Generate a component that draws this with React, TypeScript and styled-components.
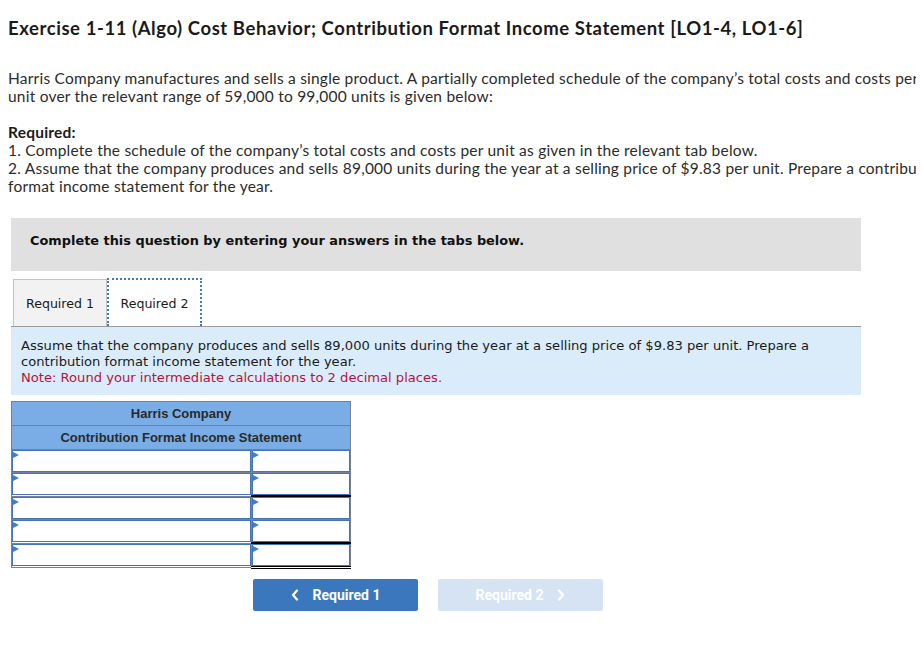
import React from "react";
import styled, { createGlobalStyle } from "styled-components";

const Global = createGlobalStyle`
  html, body { overflow: hidden; }
  body {
    margin: 8px;
    background: #ffffff;
    color: #1f1f1f;
    font-family: "Lato", "Open Sans", sans-serif;
  }
  * { box-sizing: border-box; }
`;

const Page = styled.div`
  width: 940px;
`;

const Title = styled.h1`
  margin: 8px 0 0 0;
  font-family: "Lato", sans-serif;
  font-weight: 700;
  font-size: 18.5px;
  letter-spacing: 0.57px;
  line-height: 24px;
  color: #1a1a1a;
`;

const Para = styled.p<{ $top?: number }>`
  margin: ${(p) => p.$top ?? 0}px 0 0 0;
  font-family: "Lato", sans-serif;
  font-size: 15.5px;
  letter-spacing: 0.22px;
  line-height: 18px;
  color: #2b2b2b;
`;

const Strong = styled.span`
  font-weight: 700;
  color: #1a1a1a;
`;

const Section = styled.div`
  margin: 23px 0 0 3px;
  width: 850px;
`;

const Banner = styled.div`
  background: #e0e0e0;
  padding: 14px 19px 21px;
  font-family: "DejaVu Sans", Verdana, sans-serif;
  font-weight: 700;
  font-size: 12.9px;
  line-height: 18px;
  color: #111;
`;

const Tabs = styled.div`
  margin-top: 7px;
  display: flex;
  align-items: flex-end;
  padding-left: 2px;
  border-bottom: 1px solid #9a9a9a;
`;

const Tab = styled.div<{ $active?: boolean }>`
  width: ${(p) => (p.$active ? 95 : 94)}px;
  height: ${(p) => (p.$active ? 48 : 47)}px;
  display: flex;
  align-items: center;
  justify-content: center;
  font-family: "DejaVu Sans", Verdana, sans-serif;
  font-size: 12.6px;
  color: #1a1a1a;
  background: ${(p) => (p.$active ? "#ffffff" : "#f2f2f2")};
  border: ${(p) => (p.$active ? "2px dotted #3f78c4" : "1px solid #c4c4c4")};
  border-bottom: none;
  padding-top: 1px;
`;

const Info = styled.div`
  background: #daecf9;
  padding: 11px 10px 9px;
  font-family: "DejaVu Sans", Verdana, sans-serif;
  font-size: 13.1px;
  line-height: 16px;
  color: #1a1a1a;
`;

const Note = styled.div`
  color: #b51441;
`;

const Statement = styled.table`
  margin-top: 6px;
  width: 340px;
  border-collapse: collapse;
  border: 1px solid #7f7f7f;
  font-family: "Liberation Sans", Arial, sans-serif;
`;

const HeadCell = styled.th`
  background: #7aade6;
  border: 1px solid #7f7f7f;
  height: 24px;
  padding: 0;
  font-size: 13px;
  font-weight: 700;
  color: #2a2a2a;
  text-align: center;
`;

const Cell = styled.td<{ $w: number; $rule?: "single" | "double" }>`
  width: ${(p) => p.$w}px;
  padding: 0;
  border: 1px solid #6f84a0;
  border-bottom: ${(p) =>
    p.$rule === "single"
      ? "2px solid #000"
      : p.$rule === "double"
      ? "3px double #000"
      : "1px solid #6f84a0"};
  position: relative;
  background: #fff;
`;

const Field = styled.div`
  height: 22px;
  border: 1px solid #4675b6;
  background: #ffffff;
`;

const Marker = styled.span`
  position: absolute;
  top: 2px;
  left: 1px;
  width: 0;
  height: 0;
  border-top: 3px solid transparent;
  border-bottom: 3px solid transparent;
  border-left: 6px solid #3b7fd4;
`;

const Nav = styled.div`
  margin-top: 10px;
  padding-left: 242px;
  display: flex;
  gap: 20px;
`;

const NavButton = styled.button<{ $disabled?: boolean }>`
  width: 165px;
  height: 32px;
  border: none;
  border-radius: 2px;
  background: ${(p) => (p.$disabled ? "#d6e3f2" : "#3a77bd")};
  color: #ffffff;
  font-family: "Roboto", "Liberation Sans", sans-serif;
  font-weight: 700;
  font-size: 14px;
  display: flex;
  align-items: center;
  justify-content: center;
  gap: 14px;
  cursor: pointer;
`;

const Chevron = ({ dir }: { dir: "left" | "right" }) => (
  <svg width="8" height="12" viewBox="0 0 8 12" aria-hidden>
    <path
      d={dir === "left" ? "M6 1.5 L2 6 L6 10.5" : "M2 1.5 L6 6 L2 10.5"}
      fill="none"
      stroke="#ffffff"
      strokeWidth="2.2"
      strokeLinecap="round"
      strokeLinejoin="round"
    />
  </svg>
);

const rules: Array<"single" | "double" | undefined> = [
  undefined,
  "single",
  undefined,
  "single",
  "double",
];

export default function App() {
  return (
    <Page>
      <Global />
      <Title>
        Exercise 1-11 (Algo) Cost Behavior; Contribution Format Income Statement [LO1-4, LO1-6]
      </Title>
      <Para $top={29}>
        Harris Company manufactures and sells a single product. A partially completed schedule of the
        company’s total costs and costs per unit over the relevant range of 59,000 to 99,000 units is
        given below:
      </Para>
      <Para $top={18}>
        <Strong>Required:</Strong>
        <br />
        1. Complete the schedule of the company’s total costs and costs per unit as given in the
        relevant tab below.
        <br />
        2. Assume that the company produces and sells 89,000 units during the year at a selling price
        of $9.83 per unit. Prepare a contribution format income statement for the year.
      </Para>
      <Section>
        <Banner>Complete this question by entering your answers in the tabs below.</Banner>
        <Tabs>
          <Tab>Required 1</Tab>
          <Tab $active>Required 2</Tab>
        </Tabs>
        <Info>
          Assume that the company produces and sells 89,000 units during the year at a selling price
          of $9.83 per unit. Prepare a contribution format income statement for the year.
          <Note>Note: Round your intermediate calculations to 2 decimal places.</Note>
        </Info>
        <Statement>
          <thead>
            <tr>
              <HeadCell colSpan={2}>Harris Company</HeadCell>
            </tr>
            <tr>
              <HeadCell colSpan={2}>Contribution Format Income Statement</HeadCell>
            </tr>
          </thead>
          <tbody>
            {rules.map((r, i) => (
              <tr key={i}>
                <Cell $w={241}>
                  <Field />
                  <Marker />
                </Cell>
                <Cell $w={99} $rule={r}>
                  <Field />
                  <Marker />
                </Cell>
              </tr>
            ))}
          </tbody>
        </Statement>
        <Nav>
          <NavButton>
            <Chevron dir="left" />
            Required 1
          </NavButton>
          <NavButton $disabled>
            Required 2
            <Chevron dir="right" />
          </NavButton>
        </Nav>
      </Section>
    </Page>
  );
}
